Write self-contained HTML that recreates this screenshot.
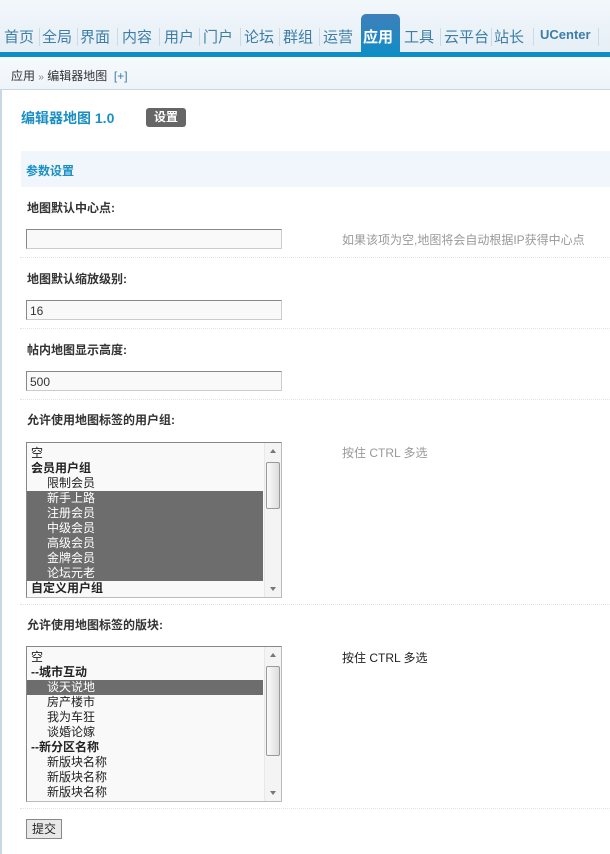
<!DOCTYPE html>
<html><head><meta charset="utf-8"><style>
*{margin:0;padding:0;box-sizing:border-box}
body{width:610px;height:854px;overflow:hidden;background:#fff;font-family:"Liberation Sans","Noto Sans CJK SC",sans-serif;font-size:12px;color:#333;position:relative}
.a{position:absolute}
#top{left:0;top:0;width:610px;height:52px;background:linear-gradient(#f2f7fb,#e6eff6)}
#bl{left:0;top:52px;width:610px;height:5px;background:#0d8ec7}
.t{top:26px;font-size:15px;color:#3c7ea8;white-space:nowrap}
.sep{top:28px;width:1px;height:18px;background:#c9dbe7}
#act{left:361px;top:14px;width:39px;height:43px;background:linear-gradient(#3f7fba,#0d8ec7);border-radius:5px 5px 0 0}
#bc{left:0;top:57px;width:610px;height:33px;background:linear-gradient(#f6fafd,#eef4f9);border-bottom:1px solid #c7d7e1}
#lb{left:0;top:90px;width:2px;height:764px;background:#c9d8e2}
.lab{left:27px;font-weight:bold;font-size:12px;color:#333}
.inp{left:26px;width:256px;height:20px;border:1px solid #888;border-right-color:#ccc;border-bottom-color:#ccc;background:#f9f9f9;padding:3px 3px;font-size:12px}
.dot{left:20px;width:590px;border-top:1px dotted #e3e3e3;height:0}
.tip{left:342px;color:#999;font-size:12px}
.sel{left:26px;width:256px;height:156px;border:1px solid #888;border-right-color:#bbb;border-bottom-color:#bbb;background:#f9f9f9;overflow:hidden;padding-top:3px}
.sel .r{height:15px;line-height:15px;font-size:12px;padding-left:4px;color:#222;width:236px}
.sel .b{font-weight:bold}
.sel .i{padding-left:20px}
.sel .s{background:#6d6d6d;color:#fff}
.sb{position:absolute;right:0;top:0;width:17px;height:100%;background:#f4f4f4;border-left:1px solid #e8e8e8}
.th{position:absolute;left:1px;width:14px;background:linear-gradient(90deg,#fafafa,#ddd);border:1px solid #999;border-radius:2px}
.ar{position:absolute;left:5px;width:0;height:0;border-left:3px solid transparent;border-right:3px solid transparent}
</style></head><body>
<div class="a" id="top"></div>
<div class="a" id="act"></div>
<div class="a" id="bl"></div>
<span class="a t" style="left:4px">首页</span><span class="a sep" style="left:39px"></span>
<span class="a t" style="left:42px">全局</span><span class="a sep" style="left:77px"></span>
<span class="a t" style="left:80px">界面</span><span class="a sep" style="left:117px"></span>
<span class="a t" style="left:122px">内容</span><span class="a sep" style="left:159px"></span>
<span class="a t" style="left:164px">用户</span><span class="a sep" style="left:199px"></span>
<span class="a t" style="left:203px">门户</span><span class="a sep" style="left:240px"></span>
<span class="a t" style="left:244px">论坛</span><span class="a sep" style="left:279px"></span>
<span class="a t" style="left:283px">群组</span><span class="a sep" style="left:319px"></span>
<span class="a t" style="left:323px">运营</span>
<span class="a t" style="left:363px;color:#fff;font-weight:bold">应用</span>
<span class="a t" style="left:404px">工具</span><span class="a sep" style="left:440px"></span>
<span class="a t" style="left:444px">云平台</span><span class="a sep" style="left:491px"></span>
<span class="a t" style="left:494px">站长</span><span class="a sep" style="left:533px"></span>
<span class="a t" style="left:540px;font-size:13px;font-weight:bold;top:27px">UCenter</span><span class="a sep" style="left:598px"></span>
<div class="a" id="bc"></div>
<span class="a" style="left:11px;top:67px;color:#333">应用 <span style="color:#888;font-size:10px">»</span> 编辑器地图 &nbsp;<span style="color:#3c7ea8">[+]</span></span>
<div class="a" id="lb"></div>
<span class="a" style="left:21px;top:108px;font-size:14px;font-weight:bold;color:#1a8fc4">编辑器地图 1.0</span>
<span class="a" style="left:146px;top:108px;width:40px;height:19px;background:#666;border-radius:3px;color:#fff;font-weight:bold;font-size:12px;text-align:center;line-height:19px">设置</span>
<div class="a" style="left:21px;top:151px;width:589px;height:36px;background:#f0f6fb"></div>
<span class="a" style="left:26px;top:162px;font-weight:bold;color:#1a8fc4">参数设置</span>
<span class="a lab" style="top:199px">地图默认中心点:</span>
<div class="a inp" style="top:229px"></div>
<span class="a tip" style="top:231px">如果该项为空,地图将会自动根据IP获得中心点</span>
<div class="a dot" style="top:257px"></div>
<span class="a lab" style="top:270px">地图默认缩放级别:</span>
<div class="a inp" style="top:300px">16</div>
<div class="a dot" style="top:328px"></div>
<span class="a lab" style="top:341px">帖内地图显示高度:</span>
<div class="a inp" style="top:371px">500</div>
<div class="a dot" style="top:399px"></div>
<span class="a lab" style="top:411px">允许使用地图标签的用户组:</span>
<div class="a sel" style="top:442px">
<div class="r">空</div><div class="r b">会员用户组</div><div class="r i">限制会员</div>
<div class="r i s">新手上路</div><div class="r i s">注册会员</div><div class="r i s">中级会员</div><div class="r i s">高级会员</div><div class="r i s">金牌会员</div><div class="r i s">论坛元老</div>
<div class="r b">自定义用户组</div>
<div class="sb"><div class="ar" style="top:6px;border-bottom:4px solid #777"></div><div class="th" style="top:19px;height:47px"></div><div class="ar" style="bottom:6px;border-top:4px solid #777"></div></div>
</div>
<span class="a tip" style="top:444px">按住 CTRL 多选</span>
<div class="a dot" style="top:604px"></div>
<span class="a lab" style="top:616px">允许使用地图标签的版块:</span>
<div class="a sel" style="top:646px">
<div class="r">空</div><div class="r b">--城市互动</div><div class="r i s">谈天说地</div><div class="r i">房产楼市</div><div class="r i">我为车狂</div><div class="r i">谈婚论嫁</div><div class="r b">--新分区名称</div><div class="r i">新版块名称</div><div class="r i">新版块名称</div><div class="r i">新版块名称</div>
<div class="sb"><div class="ar" style="top:6px;border-bottom:4px solid #777"></div><div class="th" style="top:19px;height:90px"></div><div class="ar" style="bottom:6px;border-top:4px solid #777"></div></div>
</div>
<span class="a" style="left:342px;top:649px;color:#222">按住 CTRL 多选</span>
<div class="a dot" style="top:808px"></div>
<div class="a" style="left:26px;top:819px;width:36px;height:20px;border:1px solid #888;background:#e8e8e8;text-align:center;line-height:18px;font-size:12px;color:#222">提交</div>
</body></html>
